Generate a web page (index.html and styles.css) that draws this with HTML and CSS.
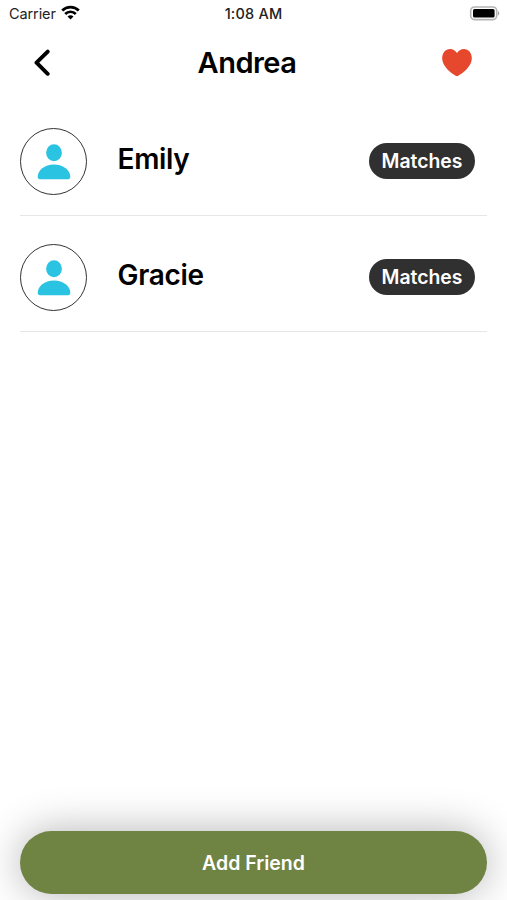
FILE: index.html
```html
<!DOCTYPE html>
<html lang="en">
<head>
    <meta charset="UTF-8">
    <meta name="viewport" content="width=device-width, initial-scale=1.0">
    <title>Andrea</title>
    <link rel="stylesheet" href="styles.css">
</head>
<body>
    <div class="status-bar">
        <div class="carrier">
            <span>Carrier</span>
            <svg class="wifi" width="19" height="15" viewBox="0 0 19 15">
                <path d="M1.2 5.500a11.700 11.700 0 0 1 16.600 0M4.200 9a7.400 7.400 0 0 1 10.600 0" fill="none" stroke="#000" stroke-width="2.700"/>
                <path d="M9.500 14.600 6.500 11.600a4.400 4.400 0 0 1 6 0z" fill="#000"/>
            </svg>
        </div>
        <span class="time">1:08 AM</span>
        <svg class="battery" width="31" height="15" viewBox="0 0 31 15">
            <rect x="1.700" y="1" width="26" height="12.600" rx="3.800" fill="#fff" stroke="#b4b4b4" stroke-width="1.600"/>
            <rect x="4" y="3" width="21.600" height="8.600" rx="1.600" fill="#000"/>
            <path d="M28.900 4.900c2 .9 2 3.800 0 4.700z" fill="#aaa"/>
        </svg>
    </div>

    <header>
        <button class="icon-btn" aria-label="Back">
            <svg width="18" height="28" viewBox="0 0 18 28">
                <path d="M14.700 2.600 3.500 13.700 14.700 24.800" fill="none" stroke="#000" stroke-width="3.900" stroke-linecap="round" stroke-linejoin="round"/>
            </svg>
        </button>
        <h1>Andrea</h1>
        <button class="icon-btn" aria-label="Favorites">
            <svg width="30" height="30" viewBox="0 0 30 30">
                <path d="M15 28.200C13 27.800.2 19.800.2 10.200.2 4.700 3.600.9 8 .9c3.200 0 5.600 1.700 7 4.200C16.400 2.600 18.800.9 22 .9c4.400 0 7.800 3.800 7.800 9.300C29.800 19.800 17 27.800 15 28.200z" fill="#e5482d"/>
            </svg>
        </button>
    </header>

    <main>
        <ul class="friends">
            <li>
                <div class="avatar">
                    <svg width="34" height="36" viewBox="0 0 34 36">
                        <ellipse cx="17" cy="8.700" rx="7.900" ry="8.500" fill="#2ac4e2"/>
                        <path d="M3 35.200C1.400 35.200.7 34.300.7 32.800.7 26.500 7.500 20.600 17 20.600s16.300 5.900 16.300 12.200c0 1.500-.7 2.400-2.300 2.400z" fill="#2ac4e2"/>
                    </svg>
                </div>
                <span class="name">Emily</span>
                <button class="matches">Matches</button>
            </li>
            <li>
                <div class="avatar">
                    <svg width="34" height="36" viewBox="0 0 34 36">
                        <ellipse cx="17" cy="8.700" rx="7.900" ry="8.500" fill="#2ac4e2"/>
                        <path d="M3 35.200C1.400 35.200.7 34.300.7 32.800.7 26.500 7.500 20.600 17 20.600s16.300 5.900 16.300 12.200c0 1.500-.7 2.400-2.300 2.400z" fill="#2ac4e2"/>
                    </svg>
                </div>
                <span class="name">Gracie</span>
                <button class="matches">Matches</button>
            </li>
        </ul>
    </main>

    <footer>
        <button class="add-friend">Add Friend</button>
    </footer>
</body>
</html>
```
FILE: styles.css
```css
* {
    box-sizing: border-box;
}

body {
    font-family: Inter, "Liberation Sans", sans-serif;
    margin: 0;
    height: 100vh;
    display: flex;
    flex-direction: column;
    overflow: hidden;
    background-color: #fff;
    color: #000;
}

button {
    font-family: inherit;
    border: none;
    padding: 0;
    cursor: pointer;
}

svg {
    display: block;
}

.status-bar {
    display: grid;
    grid-template-columns: 1fr auto 1fr;
    align-items: center;
    height: 27px;
    padding: 0 7px 0 9px;
    font-size: 14.5px;
    color: #222;
}

.carrier {
    display: flex;
    align-items: center;
    gap: 5.5px;
    letter-spacing: -0.1px;
}

.wifi {
    margin-top: -2px;
}

.time {
    margin-right: 2px;
    font-weight: 500;
    letter-spacing: 0.2px;
}

.battery {
    justify-self: end;
}

header {
    display: flex;
    align-items: center;
    justify-content: space-between;
    height: 73px;
    padding: 0 35px 1px 33px;
}

h1 {
    margin: -1px 11px 0 0;
    font-size: 29px;
    font-weight: 600;
    letter-spacing: -0.5px;
}

.icon-btn {
    display: flex;
    width: 30px;
    background: none;
}

main {
    flex: 1;
    padding: 0 20px;
}

.friends {
    list-style-type: none;
    margin: 0;
    padding: 0;
}

.friends li {
    display: flex;
    align-items: center;
    height: 116px;
    padding: 7px 12px 0 0;
    border-bottom: 1px solid #e6e6e6;
}

.avatar {
    display: flex;
    align-items: center;
    justify-content: center;
    width: 67px;
    height: 67px;
    border: 1.5px solid #333;
    border-radius: 50%;
}

.avatar svg {
    margin-top: 1px;
}

.name {
    flex: 1;
    margin: -4px 0 0 30.5px;
    font-size: 28px;
    font-weight: 600;
    letter-spacing: -0.3px;
}

.matches {
    width: 106px;
    height: 36px;
    border-radius: 18px;
    background-color: #303030;
    color: #fff;
    font-size: 19.4px;
    font-weight: 600;
}

footer {
    padding: 0 20px 6px;
}

.add-friend {
    display: block;
    width: 100%;
    height: 63px;
    border-radius: 32px;
    background-color: #6f8342;
    color: #fff;
    font-size: 19.5px;
    font-weight: 600;
    box-shadow: 0 0 42px rgba(0, 0, 0, 0.3);
}
```
